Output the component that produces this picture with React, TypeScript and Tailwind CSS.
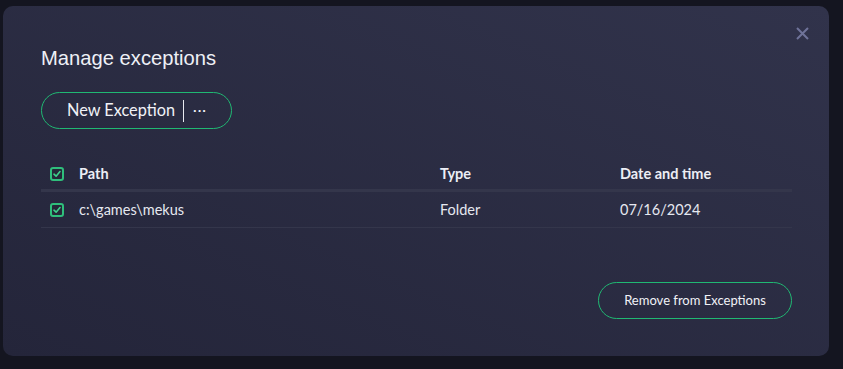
import React from 'react'

const CheckBox = () => (
  <span className="flex h-[14px] w-[14px] items-center justify-center rounded-[3px] border-2 border-[#2fbf7c] bg-[#252838]">
    <svg width="8" height="8" viewBox="0 0 8 8" fill="none">
      <path d="M1 4.2 L3.1 6.2 L7 1.5" stroke="#3fd08c" strokeWidth="1.6" strokeLinecap="round" strokeLinejoin="round" />
    </svg>
  </span>
)

const rows = [{ path: 'c:\\games\\mekus', type: 'Folder', date: '07/16/2024' }]

export default function App() {
  return (
    <div className="h-[369px] w-[843px] bg-[#141520] pl-[3px] pt-[6px]" style={{ fontFamily: 'Lato, "Noto Sans", sans-serif' }}>
      <div className="relative h-[350px] w-[826px] rounded-[10px] bg-gradient-to-bl from-[#31334b] to-[#24253a] px-[38px] pt-[38px]">
        <button className="absolute right-[20px] top-[20px] flex h-[14px] w-[14px] items-center justify-center">
          <svg width="13" height="13" viewBox="0 0 13 13">
            <path d="M1 1 L12 12 M12 1 L1 12" stroke="#6f7399" strokeWidth="2" />
          </svg>
        </button>

        <h1 className="text-[20.2px] leading-[28px] text-[#eef0f6]" style={{ fontFamily: '"Liberation Sans", Arial, sans-serif' }}>
          Manage exceptions
        </h1>

        <button className="mt-[20px] flex h-[37px] w-[191px] items-center rounded-full border border-[#20b873] pl-[25px] text-[16.3px] text-[#f1f2f7]">
          <span>New Exception</span>
          <span className="ml-[8px] h-[22px] w-px bg-[#e8e9f0]" />
          <span className="ml-[9px] -mt-[3px] text-[14px] tracking-[1px]">···</span>
        </button>

        <div className="mt-[34px] w-[751px] text-[14.5px]">
          <div className="flex h-[29px] items-center border-b-[3px] border-[#34364b] pb-[5px] font-bold text-[#eceef5]">
            <div className="w-[38px] pl-[9px]"><CheckBox /></div>
            <div className="w-[361px]">Path</div>
            <div className="w-[180px]">Type</div>
            <div>Date and time</div>
          </div>
          {rows.map((r) => (
            <div key={r.path} className="flex h-[36px] items-center border-b border-[#34364b] text-[#e6e8f0]">
              <div className="w-[38px] pl-[9px]"><CheckBox /></div>
              <div className="w-[361px]">{r.path}</div>
              <div className="w-[180px]">{r.type}</div>
              <div>{r.date}</div>
            </div>
          ))}
        </div>

        <div className="mt-[54px] flex w-[751px] justify-end">
          <button className="h-[37px] w-[194px] rounded-full border border-[#20b873] text-[13px] text-[#f1f2f7]">
            Remove from Exceptions
          </button>
        </div>
      </div>
    </div>
  )
}
